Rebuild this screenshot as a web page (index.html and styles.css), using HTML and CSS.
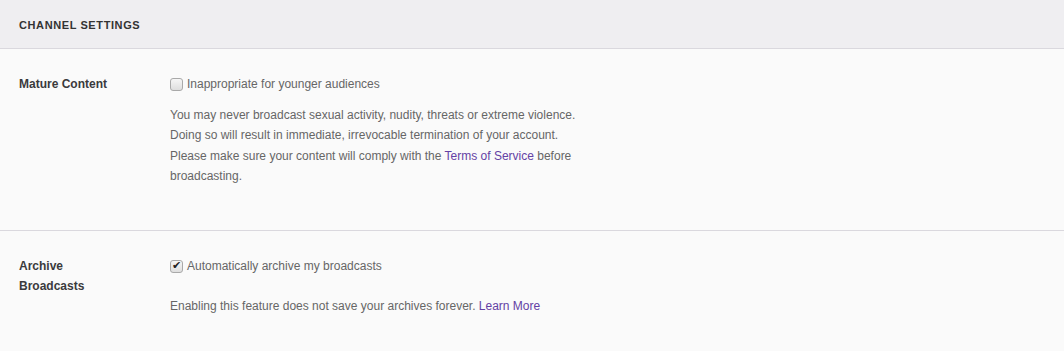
FILE: index.html
```html
<!DOCTYPE html>
<html lang="en">

<head>
    <meta charset="UTF-8">
    <meta name="viewport" content="width=device-width, initial-scale=1.0">
    <title>Channel Settings</title>
    <link rel="stylesheet" href="styles.css">
</head>

<body>

    <div class="panel">
        <div class="panel-header">
            <h2>Channel Settings</h2>
        </div>

        <div class="setting">
            <div class="setting-label">Mature Content</div>
            <div class="setting-body">
                <label class="check-row">
                    <input type="checkbox" class="check">
                    <span>Inappropriate for younger audiences</span>
                </label>
                <p class="note note-mature">
                    You may never broadcast sexual activity, nudity, threats or extreme violence.<br>
                    Doing so will result in immediate, irrevocable termination of your account.<br>
                    Please make sure your content will comply with the <a href="#">Terms of Service</a> before<br>
                    broadcasting.
                </p>
            </div>
        </div>

        <div class="setting">
            <div class="setting-label">Archive<br>Broadcasts</div>
            <div class="setting-body">
                <label class="check-row">
                    <input type="checkbox" class="check" checked>
                    <span>Automatically archive my broadcasts</span>
                </label>
                <p class="note note-archive">
                    Enabling this feature does not save your archives forever. <a href="#">Learn More</a>
                </p>
            </div>
        </div>
    </div>

</body>

</html>
```

FILE: styles.css
```css
/* General Styles */
body {
    margin: 0;
    font-family: 'Liberation Sans', Arial, sans-serif;
    background-color: #fafafa;
    color: #333333;
}

.panel {
    width: 100%;
}

.panel-header {
    height: 46px;
    display: flex;
    align-items: center;
    padding: 2px 0 0 19px;
    background-color: #efeef1;
    border-bottom: 1px solid #dad8de;
}

.panel-header h2 {
    margin: 0;
    font-size: 11px;
    font-weight: bold;
    text-transform: uppercase;
    letter-spacing: 0.6px;
    color: #333333;
}

.setting {
    display: flex;
    padding: 25px 19px 42px;
    border-bottom: 1px solid #dad8de;
}

.setting:last-child {
    border-bottom: none;
}

.setting-label {
    width: 151px;
    flex-shrink: 0;
    font-size: 12px;
    font-weight: bold;
    line-height: 20px;
    color: #3a3a3d;
}

.setting-body {
    flex: 1;
}

.check-row {
    display: flex;
    align-items: center;
    height: 20px;
    font-size: 12px;
    color: #666666;
}

.check {
    appearance: none;
    -webkit-appearance: none;
    width: 13px;
    height: 13px;
    margin: 0 4px 0 0;
    border: 1px solid #a9a9a9;
    border-radius: 3px;
    background: linear-gradient(#f6f6f6, #dedede);
    position: relative;
}

.check:checked::after {
    content: "\2714";
    position: absolute;
    left: 1px;
    top: -2px;
    font-size: 11px;
    color: #222222;
}

.note {
    margin: 11px 0 0;
    font-size: 12px;
    line-height: 20.3px;
    color: #666666;
}

.note-mature {
    margin-bottom: 2px;
}

.note-archive {
    margin-top: 20px;
}

.note a {
    color: #6441a4;
    text-decoration: none;
}
```
